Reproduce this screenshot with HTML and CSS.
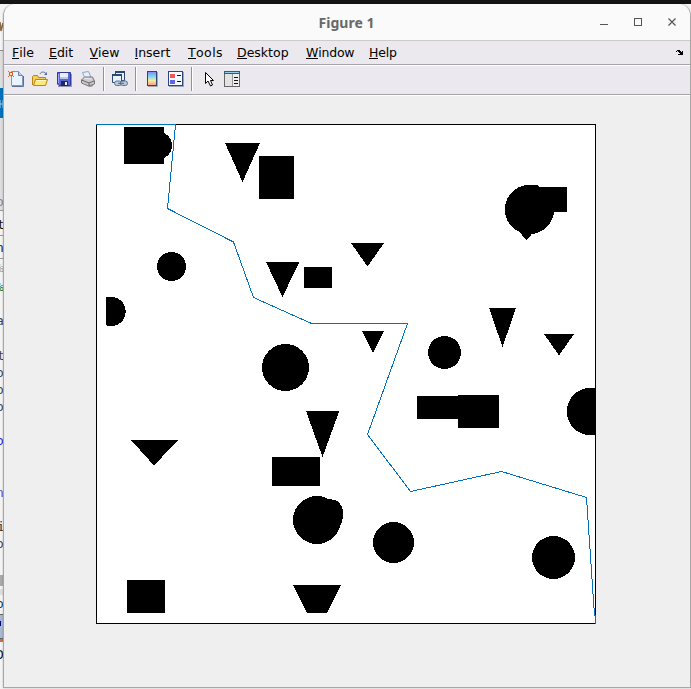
FILE: index.html
```html
<!DOCTYPE html>
<html lang="en">
<head>
<meta charset="utf-8">
<title>Figure 1</title>
<link rel="stylesheet" href="styles.css">
</head>
<body>
<div class="desktop">
  <svg class="behind" width="691" height="689" viewBox="0 0 691 689" aria-hidden="true">
    <rect width="691" height="689" fill="#f4f4f4"/>
    <rect width="691" height="4" fill="#141414"/>
    <path d="M0 22l1 9 2-8" stroke="#8c6a48" stroke-width="1.5" fill="none"/>
    <path d="M0 50.500h4M688 50.500h3" stroke="#8c8c8c"/>
    <rect y="51" width="4" height="37" fill="#dedede"/>
    <rect y="88" width="4" height="30" fill="#0072bd"/>
    <path d="M0 100v8M0 104h3M3 100v8" stroke="#9fd0ee" fill="none"/>
    <rect y="118" width="4" height="92" fill="#dedede"/>
    <path d="M0 210.500h4M0 235.500h4M0 258.500h4" stroke="#999"/>
    <g class="code">
      <text x="-4" y="206" fill="#888">o</text>
      <text x="-3" y="229" fill="#111">t</text>
      <text x="-4" y="252" fill="#223">n</text>
      <text x="-4" y="272" fill="#aaa">%</text>
      <text x="-4" y="291" fill="#1a7c2c">%</text>
      <text x="-4" y="325" fill="#444">a</text>
      <text x="-3" y="360" fill="#444">t</text>
      <text x="-4" y="377" fill="#444">o</text>
      <text x="-4" y="394" fill="#444">o</text>
      <text x="-4" y="411" fill="#444">o</text>
      <text x="-4" y="445" fill="#2a20e0">o</text>
      <text x="-4" y="497" fill="#5a50e0">n</text>
      <text x="-3" y="531" fill="#333">i</text>
      <text x="-4" y="548" fill="#444">o</text>
      <text x="-4" y="608" fill="#123a66">o</text>
      <text x="-4" y="659" fill="#111">D</text>
    </g>
    <rect y="575" width="4" height="11" fill="#aaa"/>
    <rect y="589" width="4" height="6" fill="#ddd"/>
    <rect y="615" width="4" height="23" fill="#a9b9d0"/>
    <path d="M0 614.500h4M0 638.500h4" stroke="#666"/>
    <path d="M0 621h1v5h-1z" fill="#00008b"/>
    <rect y="639" width="3" height="3" fill="#d06c50"/>
    <rect x="690" y="88" width="1" height="30" fill="#0b4f80"/>
    <rect x="690" y="614" width="1" height="25" fill="#8195ab"/>
  </svg>

  <main class="window">
    <header class="titlebar">
      <h1 class="title">Figure 1</h1>
      <svg class="controls" width="80" height="16" viewBox="597 14 80 16">
        <path d="M600 24.500h8" stroke="#555"/>
        <rect x="634.500" y="18.500" width="7" height="7" fill="none" stroke="#555"/>
        <path d="M668.500 18.500l7 7M675.500 18.500l-7 7" stroke="#555" stroke-width="1.200"/>
      </svg>
    </header>

    <nav class="menubar">
      <span class="item"><u>F</u>ile</span>
      <span class="item"><u>E</u>dit</span>
      <span class="item"><u>V</u>iew</span>
      <span class="item"><u>I</u>nsert</span>
      <span class="item loose"><u>T</u>ools</span>
      <span class="item"><u>D</u>esktop</span>
      <span class="item tight"><u>W</u>indow</span>
      <span class="item tight"><u>H</u>elp</span>
      <svg class="dock" width="8" height="6" viewBox="0 0 8 6" shape-rendering="crispEdges">
        <path d="M1 0h3v1h1v1h1v-1h1v4h-5v-1h2v-1h-1v-1h-1v-1h-1zM0 1h1v1h-1z"/>
      </svg>
    </nav>

    <div class="toolbar">
      <svg class="icon" viewBox="0 0 16 16">
        <path d="M3.500 .5h7l4 4v10h-11z" fill="#eaf4ff" stroke="#7c97c4"/>
        <path d="M10.500 .5v4h4" fill="#bdd2ec" stroke="#6682b4"/>
        <path d="M4 15.500h11.500V5" fill="none" stroke="#5d6f94"/>
        <path d="M0 0l6 6M6 0L0 6" stroke="#df6540"/>
        <circle cx="3" cy="3" r="1.700" fill="#fff3a5" stroke="#dc5832"/>
      </svg>
      <svg class="icon" viewBox="0 0 16 16">
        <path d="M8 3c1-2.500 4-2.500 6-.5" fill="none" stroke="#526f9b"/><path d="M12 4h3V1z" fill="#526f9b"/>
        <path d="M.5 14V5.500l1-1h4l1 2h7v3" fill="#f3cf59" stroke="#b48718"/>
        <path d="M1.500 14.500l2-6h12l-2 6z" fill="#ffe778" stroke="#b58716"/>
        <path d="M4 9.500h10" stroke="#fff9c9"/>
      </svg>
      <svg class="icon" viewBox="0 0 16 16">
        <path d="M1.500 1.500h13v13H3l-1.500-1.500z" fill="#5965d5" stroke="#303a98"/>
        <path d="M2 15.500h13.500V3" fill="none" stroke="#8c93b4"/>
        <path d="M4 2h8v6H4z" fill="#e8efff"/><path d="M4 6h8v2H4z" fill="#b8c6ec"/>
        <path d="M5 10h7v5H5z" fill="#25275b"/><path d="M9 11h2v3H9z" fill="#eef"/>
        <path d="M2.500 3v9" stroke="#9ba4ff"/>
      </svg>
      <svg class="icon" viewBox="0 0 16 16">
        <path d="M2.500 1.500l6-1 3 7-6 1z" fill="#e4f0ff" stroke="#8ba4c9"/>
        <path d="M1.500 9l3-3h8l2 4v3l-6 2-7-3z" fill="#cbcbcb" stroke="#777"/>
        <path d="M1.500 9l7.500 3 5-2M9 12v3" fill="none" stroke="#666"/>
        <path d="M4.500 7.200l7 .8" stroke="#eee"/><path d="M5 13l5 2 3-2v2l-3 1z" fill="#888"/>
      </svg>
      <i class="separator"></i>
      <svg class="icon" viewBox="0 0 16 16">
        <path d="M3.500 .5h9v9h-9z" fill="#e9f2fb" stroke="#294779"/><path d="M3 1h10" stroke="#294779" stroke-width="2"/>
        <path d="M.5 3.500h9v8h-9z" fill="#e9f2fb" stroke="#294779"/><path d="M0 4h10" stroke="#294779" stroke-width="2"/>
        <rect x="2.500" y="10" width="7" height="4.500" rx="2.200" fill="#b8cada" stroke="#5b7490"/>
        <rect x="8.500" y="10" width="7" height="4.500" rx="2.200" fill="#b8cada" stroke="#5b7490"/>
        <path d="M6 12.300h6" stroke="#4a6482"/>
      </svg>
      <i class="separator"></i>
      <svg class="icon" viewBox="0 0 16 16">
        <defs><linearGradient id="bar" x2="0" y2="1"><stop stop-color="#8583ef"/><stop offset=".35" stop-color="#82d3f4"/><stop offset=".65" stop-color="#f4ed9c"/><stop offset="1" stop-color="#f49b80"/></linearGradient></defs>
        <path d="M13.500 1v14.500H4" fill="none" stroke="#aaa"/>
        <rect x="3.500" y=".5" width="9" height="14" fill="url(#bar)" stroke="#294779"/>
      </svg>
      <svg class="icon" viewBox="0 0 16 16" shape-rendering="crispEdges">
        <path d="M15.500 1v14.500H1" fill="none" stroke="#9aa4b4"/>
        <rect x=".5" y=".5" width="14" height="14" fill="#f4f8ff" stroke="#294779"/>
        <path d="M2 3h5v4H2z" fill="#e95b5b"/><path d="M2 9h5v4H2z" fill="#6262e4"/>
        <path d="M9 4.500h4M9 10.500h4" stroke="#111"/>
      </svg>
      <i class="separator"></i>
      <svg class="icon" viewBox="0 0 16 16">
        <path d="M5.500 1.500v11l2.500-2.500 2.500 5 2-1-2-4.500h3z" fill="#fff" stroke="#000"/>
      </svg>
      <svg class="icon" viewBox="0 0 16 16" shape-rendering="crispEdges">
        <rect x=".5" y=".5" width="15" height="15" fill="#eee" stroke="#666"/>
        <path d="M0 0h16v3H0z" fill="#315d76"/><path d="M1 1h14v1H1z" fill="#8ed0e7"/>
        <path d="M1 3h7v12H1z" fill="#e3e3e3"/><path d="M8.500 3v12" stroke="#999"/>
        <path d="M10 6.500h4M10 9.500h4M10 12.500h4" stroke="#111"/>
      </svg>
    </div>

    <section class="canvas">
      <svg class="plot" width="500" height="500" viewBox="96 124 500 500" shape-rendering="crispEdges">
        <rect x="96.500" y="124.500" width="499" height="499" fill="#fff" stroke="#000"/>
        <clipPath id="left"><path d="M106 290h30v45h-30z"/></clipPath>
        <clipPath id="right"><path d="M560 380h36v60h-36z"/></clipPath>
        <path d="M124 127h40v37h-40zM259 156h35v43h-35zM304 267h28v21h-28zM537 187h30v25h-30zM417 396h41v23h-41zM458 395h41v33h-41zM272 457h48v29h-48zM127 580h38v33h-38z"/>
        <path d="M225 143h35l-17.500 39zM266 262h33.300l-16.800 35zM351 243h33l-16.500 23.500zM362 331h22l-11 22.500zM489 308h27l-13.500 39zM544 334h30l-15 21.500zM306 411h33.300l-16.800 46zM131 440h47l-24 25.500zM293 585h48l-14 28h-20zM518 230h17l-8.500 10.500z"/>
        <circle cx="158.200" cy="145.500" r="13.800"/>
        <circle cx="171.500" cy="266.500" r="14.500"/>
        <circle cx="111" cy="311.500" r="14.700" clip-path="url(#left)"/>
        <circle cx="285.500" cy="367.500" r="23.500"/>
        <circle cx="444.500" cy="352.500" r="16.500"/>
        <circle cx="529.500" cy="209.500" r="24.700"/>
        <path d="M529 185h8l3 2v6h-11z"/>
        <circle cx="590.500" cy="411.500" r="23.700" clip-path="url(#right)"/>
        <circle cx="317" cy="520" r="24"/>
        <path d="M320 496l8 3 7 1 4 2 3 5 1 4v6l-2 8h-21z"/>
        <circle cx="393.500" cy="542.500" r="20.500"/>
        <circle cx="553.500" cy="557.500" r="21.500"/>
        <path d="M96 124.500H175.500L167.500 208.500 233.500 242 253.500 297.500 311.500 323.500H407.500L367.500 434.500 410.500 491.500 501.500 471.500 586.500 497.500 594.500 615.500 595.500 616V624" fill="none" stroke="#0072bd"/>
      </svg>
    </section>
  </main>
</div>
</body>
</html>
```
FILE: styles.css
```css
* { box-sizing: border-box; }
body { margin: 0; overflow: hidden; }

.desktop {
  position: relative;
  width: 691px;
  height: 689px;
  padding: 4px 0 1px 3px;
}
.behind { position: absolute; inset: 0; }
.code { font: 13px "DejaVu Sans Mono", monospace; }

.window {
  position: relative;
  display: flex;
  flex-direction: column;
  height: 684px;
  border: solid #a6a6a6;
  border-width: 0 1px 1px;
  border-radius: 12px 12px 0 0;
  background: #efefef;
  box-shadow: 0 0 2px rgba(0, 0, 0, .25);
  overflow: hidden;
}

.titlebar {
  display: flex;
  align-items: center;
  justify-content: flex-end;
  height: 37px;
  padding-right: 13px;
  border-bottom: 1px solid #cbcbcb;
  background: #fafafa;
}
.title {
  flex: 1;
  margin: 0;
  padding: 2px 0 0 92px;
  color: #686868;
  font: bold 14px/36px "Noto Sans", sans-serif;
  text-align: center;
}

.menubar {
  display: grid;
  grid-template-columns: 37px 40.5px 45px 53.500px 49px 69px 63px 1fr 8px;
  align-items: center;
  height: 25px;
  padding: 0 6px 0 8px;
  border-bottom: 1px solid #fff;
  box-shadow: inset 0 -1px #a5a3ab;
  background: #ebe8ee;
  color: #000;
  font: 12.5px/20px "DejaVu Sans", sans-serif;
}
.item u {
  display: inline-block;
  border-bottom: 1px solid #000;
  line-height: 11px;
  text-decoration: none;
}
.loose { letter-spacing: .4px; }
.tight { letter-spacing: -.2px; }

.toolbar {
  display: flex;
  align-items: center;
  gap: 8px;
  height: 30px;
  padding: 0 4px 3px;
  border-bottom: 1px solid #fff;
  box-shadow: inset 0 -1px #a5a3ab;
  background: #ebe8ee;
}
.icon { flex: none; width: 16px; height: 16px; }
.separator { width: 1px; height: 24px; margin-left: -1px; background: #929098; box-shadow: 1px 0 #fff; }

.canvas { padding: 28px 0 0 92px; }
.plot { display: block; }
```
